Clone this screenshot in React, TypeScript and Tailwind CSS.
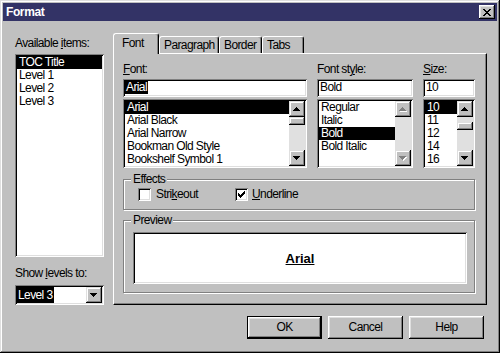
import type { ReactNode } from 'react'

// classic 3d bevels
const windowFrame = 'shadow-[inset_-1px_-1px_#000,inset_1px_1px_#dfdfdf,inset_-2px_-2px_#808080,inset_2px_2px_#fff]'
const raised = 'shadow-[inset_-1px_-1px_#000,inset_1px_1px_#fff,inset_-2px_-2px_#808080,inset_2px_2px_#dfdfdf]'
const sunken = 'shadow-[inset_1px_1px_#808080,inset_-1px_-1px_#fff,inset_2px_2px_#000,inset_-2px_-2px_#dfdfdf]'
const scrollBevel = 'shadow-[inset_-1px_-1px_#000,inset_1px_1px_#dfdfdf,inset_-2px_-2px_#808080,inset_2px_2px_#fff]'

const UP = 'M3 0h1v1H3zM2 1h3v1H2zM1 2h5v1H1zM0 3h7v1H0z'
const DOWN = 'M0 0h7v1H0zM1 1h5v1H1zM2 2h3v1H2zM3 3h1v1H3z'

function Arrow({ dir, disabled }: { dir: 'up' | 'down'; disabled?: boolean }) {
  const d = dir === 'up' ? UP : DOWN
  return (
    <svg width="8" height="5" viewBox="0 0 8 5" className="block">
      {disabled && <path d={d} fill="#fff" transform="translate(1 1)" />}
      <path d={d} fill={disabled ? '#808080' : '#000'} />
    </svg>
  )
}

function ScrollButton({ children }: { children: ReactNode }) {
  return (
    <div className={`w-[16px] h-[16px] shrink-0 bg-[#c0c0c0] flex items-center justify-center ${scrollBevel}`}>
      {children}
    </div>
  )
}

function ScrollBar({ thumb, disabled }: { thumb?: string; disabled?: boolean }) {
  return (
    <div className="w-[16px] shrink-0 flex flex-col bg-[#e0e0e0]">
      <ScrollButton>
        <Arrow dir="up" disabled={disabled} />
      </ScrollButton>
      <div className="flex-1">
        {thumb && <div className={`h-[8px] bg-[#c0c0c0] ${scrollBevel} ${thumb}`} />}
      </div>
      <ScrollButton>
        <Arrow dir="down" disabled={disabled} />
      </ScrollButton>
    </div>
  )
}

function ListBox({ items, selected, thumb, disabled }: { items: string[]; selected: number; thumb?: string; disabled?: boolean }) {
  return (
    <div className={`mt-[2px] h-[69px] bg-white p-[2px] flex ${sunken}`}>
      <div className="flex-1 overflow-hidden">
        {items.map((it, i) => (
          <div
            key={it}
            className={`h-[13px] leading-[12px] pl-[2px] whitespace-nowrap ${i === selected ? 'bg-black text-white' : ''}`}
          >
            {it}
          </div>
        ))}
      </div>
      <ScrollBar thumb={thumb} disabled={disabled} />
    </div>
  )
}

function TextBox({ value, selected }: { value: string; selected?: boolean }) {
  return (
    <div className={`mt-[3px] h-[18px] bg-white pl-[2px] pt-[2px] ${sunken}`}>
      <span className={`inline-block h-[13px] px-[1px] ${selected ? 'bg-black text-white' : ''}`}>{value}</span>
    </div>
  )
}

function CheckBox({ checked }: { checked?: boolean }) {
  return (
    <div className={`w-[13px] h-[13px] shrink-0 bg-white flex items-center justify-center ${sunken}`}>
      {checked && (
        <svg width="7" height="7" viewBox="0 0 7 7" className="block">
          <path
            d="M6 0h1v1H6zM5 1h2v1H5zM0 2h1v1H0zM4 2h3v1H4zM0 3h2v1H0zM3 3h3v1H3zM0 4h5v1H0zM1 5h3v1H1zM2 6h1v1H2z"
            fill="#000"
          />
        </svg>
      )}
    </div>
  )
}

const tabs = ['Font', 'Paragraph', 'Border', 'Tabs']

export default function App() {
  return (
    <div
      className={`w-[500px] h-[353px] bg-[#c0c0c0] p-[3px] flex flex-col text-[12px] leading-[13px] tracking-[-0.6px] text-black font-['Liberation_Sans',Arial,sans-serif] ${windowFrame}`}
    >
      {/* title bar */}
      <div className="h-[18px] shrink-0 bg-[#333366] flex items-center justify-between pl-[3px] pr-[2px]">
        <span className="text-white font-bold text-[12px] tracking-[-0.4px]">Format</span>
        <div className={`w-[16px] h-[14px] bg-[#c0c0c0] flex items-center justify-center ${raised}`}>
          <svg width="8" height="7" viewBox="0 0 8 7" className="block">
            <path
              d="M0 0h2v1H0zM6 0h2v1H6zM1 1h2v1H1zM5 1h2v1H5zM2 2h4v1H2zM3 3h2v1H3zM2 4h4v1H2zM1 5h2v1H1zM5 5h2v1H5zM0 6h2v1H0zM6 6h2v1H6z"
              fill="#000"
            />
          </svg>
        </div>
      </div>

      <div className="flex-1 flex flex-col pl-[12px] pr-[10px] pt-[12px]">
        <div className="h-[272px] flex gap-[9px]">
          {/* left column */}
          <div className="w-[89px] flex flex-col pt-[4px]">
            <div className="h-[13px]">
              Available <span className="underline">i</span>tems:
            </div>
            <div className={`mt-[4px] h-[203px] bg-white p-[2px] ${sunken}`}>
              {['TOC Title', 'Level 1', 'Level 2', 'Level 3'].map((it, i) => (
                <div key={it} className={`h-[13px] pl-[2px] ${i === 0 ? 'bg-black text-white' : ''}`}>
                  {it}
                </div>
              ))}
            </div>
            <div className="mt-[10px] h-[13px]">
              Show <span className="underline">l</span>evels to:
            </div>
            <div className={`mt-[5px] h-[20px] bg-white p-[2px] flex ${sunken}`}>
              <div className="flex-1 flex">
                <span className="h-full flex items-center px-[1px] bg-black text-white">Level 3</span>
              </div>
              <ScrollButton>
                <Arrow dir="down" />
              </ScrollButton>
            </div>
          </div>

          {/* tab control */}
          <div className="flex-1 flex flex-col">
            <div className="h-[20px] flex items-end relative z-10">
              {tabs.map((t, i) =>
                i === 0 ? (
                  <div
                    key={t}
                    className="w-[46px] h-[21px] -mb-[1px] bg-[#c0c0c0] border-t border-l border-r border-t-white border-l-white border-r-black rounded-t-[3px] shadow-[inset_-1px_0_#808080] pl-[8px] pt-[3px]"
                  >
                    {t}
                  </div>
                ) : (
                  <div
                    key={t}
                    className={`h-[17px] bg-[#c0c0c0] border-t border-l border-r border-t-white border-l-white border-r-black rounded-t-[3px] shadow-[inset_-1px_0_#808080] pl-[4px] pt-[2px] ${
                      i === 1 ? 'w-[60px]' : i === 2 ? 'w-[43px]' : 'w-[42px]'
                    }`}
                  >
                    {t}
                  </div>
                ),
              )}
            </div>
            <div className="flex-1 border border-t-white border-l-white border-r-black border-b-black shadow-[inset_-1px_-1px_#808080] pt-[9px] pl-[9px] pr-[11px]">
              <div className="flex gap-[10px]">
                <div className="w-[184px] flex flex-col">
                  <div className="h-[13px]">
                    <span className="underline">F</span>ont:
                  </div>
                  <TextBox value="Arial" selected />
                  <ListBox
                    items={['Arial', 'Arial Black', 'Arial Narrow', 'Bookman Old Style', 'Bookshelf Symbol 1']}
                    selected={0}
                    thumb="mt-0"
                  />
                </div>
                <div className="w-[96px] flex flex-col">
                  <div className="h-[13px]">
                    Font st<span className="underline">y</span>le:
                  </div>
                  <TextBox value="Bold" />
                  <ListBox items={['Regular', 'Italic', 'Bold', 'Bold Italic']} selected={2} disabled />
                </div>
                <div className="w-[52px] flex flex-col">
                  <div className="h-[13px]">
                    <span className="underline">S</span>ize:
                  </div>
                  <TextBox value="10" />
                  <ListBox items={['10', '11', '12', '14', '16']} selected={0} thumb="mt-[5px]" />
                </div>
              </div>

              <fieldset className="mt-[5px] h-[37px] border border-[#808080] shadow-[1px_1px_#fff,inset_1px_1px_#fff]">
                <legend className="ml-[7px] px-[2px] bg-[#c0c0c0]">Effects</legend>
                <div className="mt-[2px] pl-[14px] flex items-center h-[13px]">
                  <div className="w-[97px] flex items-center">
                    <CheckBox />
                    <span className="ml-[5px]">
                      Stri<span className="underline">k</span>eout
                    </span>
                  </div>
                  <CheckBox checked />
                  <span className="ml-[4px]">
                    <span className="underline">U</span>nderline
                  </span>
                </div>
              </fieldset>

              <fieldset className="mt-[4px] h-[79px] border border-[#808080] shadow-[1px_1px_#fff,inset_1px_1px_#fff]">
                <legend className="ml-[7px] px-[2px] bg-[#c0c0c0]">Preview</legend>
                <div className="mt-[5px] pl-[9px] pr-[7px]">
                  <div className={`h-[52px] bg-white flex items-center justify-center ${sunken}`}>
                    <span className="font-bold text-[13px] underline tracking-normal">Arial</span>
                  </div>
                </div>
              </fieldset>
            </div>
          </div>
        </div>

        {/* buttons */}
        <div className="mt-[11px] flex justify-end gap-[6px] pr-[3px]">
          <button className={`w-[75px] h-[23px] border border-black bg-[#c0c0c0] ${raised}`}>OK</button>
          <button className={`w-[75px] h-[23px] bg-[#c0c0c0] ${raised}`}>Cancel</button>
          <button className={`w-[75px] h-[23px] bg-[#c0c0c0] ${raised}`}>Help</button>
        </div>
      </div>
    </div>
  )
}
